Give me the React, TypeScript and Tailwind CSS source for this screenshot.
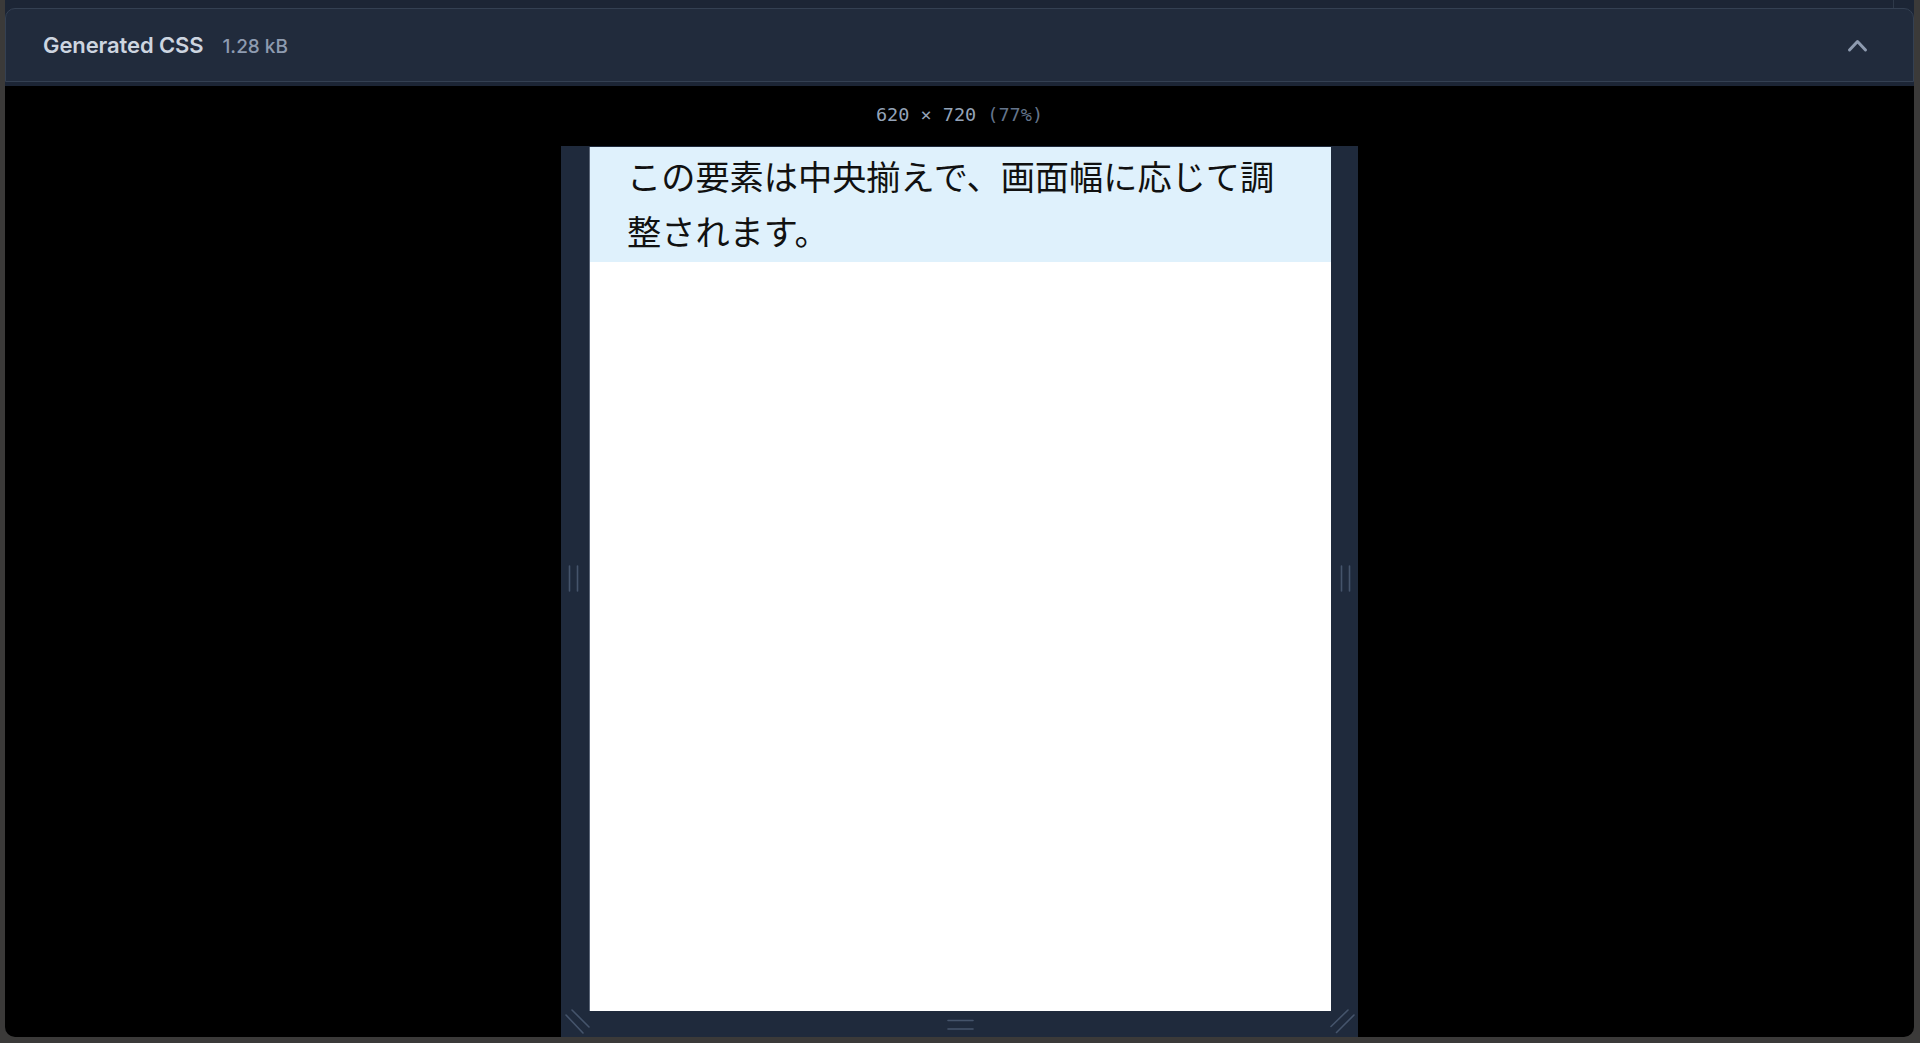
import React from "react";

export default function App() {
  return (
    <div className="w-[1920px] h-[1043px] bg-[#3b3a39] overflow-hidden">
      <div className="ml-[5px] w-[1909px] h-[1037px] bg-black rounded-b-[10px] overflow-hidden flex flex-col">
        {/* header area */}
        <div className="relative h-[86px] bg-[#1c2535] pt-[8px] shrink-0">
          <div className="absolute right-[20px] top-0 h-[8px] w-px bg-[#2e3949]" />
          <div className="h-[74px] rounded-t-[10px] border border-[#344052] bg-[#212b3c] flex items-center justify-between pl-[37px] pr-[44px]">
            <div className="flex items-baseline gap-[19px]" style={{ fontFamily: "Inter, 'Noto Sans', sans-serif" }}>
              <span className="text-[22px] font-semibold text-[#cdd5e0] tracking-[-0.1px]">Generated CSS</span>
              <span className="text-[19px] font-medium text-[#8e9bb0]">1.28 kB</span>
            </div>
            <svg width="22" height="15" viewBox="0 0 22 15" className="text-[#8e9bb0]">
              <polyline points="2.5,12 10.5,3.5 18.5,12" fill="none" stroke="currentColor" strokeWidth="3" strokeLinecap="round" strokeLinejoin="round" />
            </svg>
          </div>
        </div>
        {/* preview area */}
        <div className="flex-1 flex flex-col items-center pt-[17px] min-h-0">
          <div className="h-[24px] leading-[24px] text-[18.5px] text-[#94a3b8]" style={{ fontFamily: "'DejaVu Sans Mono', 'Liberation Mono', monospace" }}>
            620 × 720 <span className="text-[#64748b]">(77%)</span>
          </div>
          <div className="relative mt-[19px] w-[797px] flex-1 bg-[#1f2a3c] pl-[28px] pr-[27px] pt-[1px] pb-[26px]">
            <div className="w-[742px] h-[864px] bg-white border-l border-[#5b6678] overflow-hidden">
              <div
                className="bg-[#dff1fc] pl-[37px] pr-[38px] pt-[1px] pb-[4px] text-[34.2px] leading-[55px] text-[#111]"
                style={{ fontFamily: "'Noto Sans CJK JP', 'Noto Sans', sans-serif" }}
              >
                この要素は中央揃えで、画面幅に応じて調整されます。
              </div>
            </div>
            <svg className="absolute inset-0 pointer-events-none" width="797" height="891" viewBox="0 0 797 891">
              <g stroke="#45546b" strokeWidth="1.6" strokeLinecap="round">
                <line x1="8.5" y1="420" x2="8.5" y2="445" />
                <line x1="16.5" y1="420" x2="16.5" y2="445" />
                <line x1="780.5" y1="420" x2="780.5" y2="445" />
                <line x1="788.5" y1="420" x2="788.5" y2="445" />
                <line x1="387" y1="874.5" x2="412" y2="874.5" />
                <line x1="387" y1="883" x2="412" y2="883" />
                <line x1="5" y1="869" x2="22" y2="887" />
                <line x1="11" y1="864" x2="28" y2="881" />
                <line x1="770" y1="880.5" x2="787" y2="864" />
                <line x1="775.5" y1="886.5" x2="793" y2="869" />
              </g>
            </svg>
          </div>
        </div>
      </div>
    </div>
  );
}
